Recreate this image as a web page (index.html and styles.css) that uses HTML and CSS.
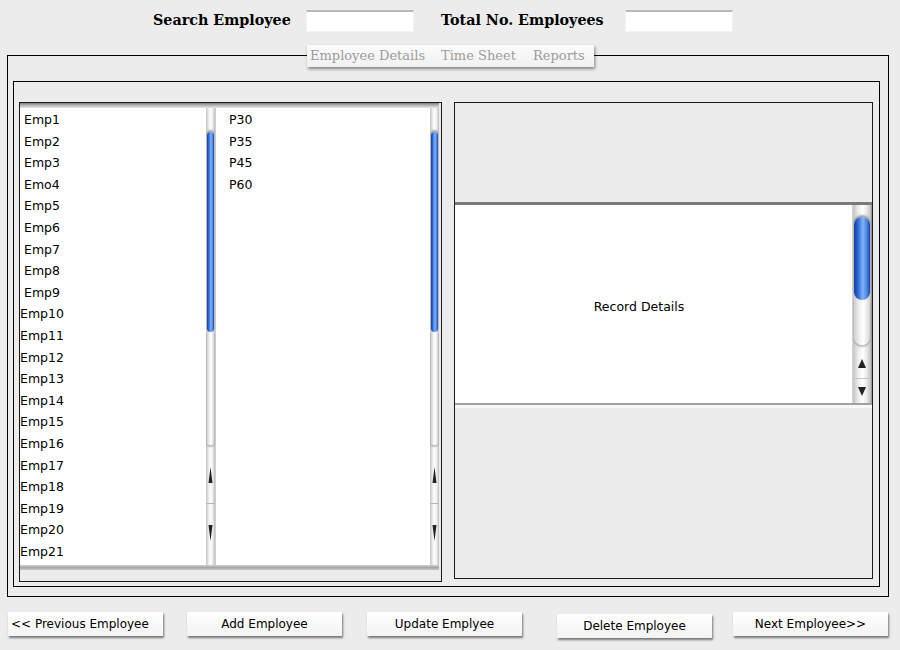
FILE: index.html
```html
<!DOCTYPE html>
<html>
<head>
<meta charset="utf-8">
<title>Employees</title>
<link rel="stylesheet" href="styles.css">
</head>
<body>
<header class="top">
  <label class="lbl lbl-search">Search Employee</label>
  <input class="field" type="text">
  <label class="lbl lbl-total">Total No. Employees</label>
  <input class="field" type="text">
</header>

<section class="frame">
  <nav class="tabs">
    <span class="tab t1">Employee Details</span>
    <span class="tab t2">Time Sheet</span>
    <span class="tab t3">Reports</span>
  </nav>
  <div class="inner">
    <div class="lists-panel">
      <div class="listbox">
        <div class="strip-top"></div>
        <div class="lists-row">
          <ul class="list list-emp">
            <li class="pad">Emp1</li>
            <li class="pad">Emp2</li>
            <li class="pad">Emp3</li>
            <li class="pad">Emo4</li>
            <li class="pad">Emp5</li>
            <li class="pad">Emp6</li>
            <li class="pad">Emp7</li>
            <li class="pad">Emp8</li>
            <li class="pad">Emp9</li>
            <li>Emp10</li>
            <li>Emp11</li>
            <li>Emp12</li>
            <li>Emp13</li>
            <li>Emp14</li>
            <li>Emp15</li>
            <li>Emp16</li>
            <li>Emp17</li>
            <li>Emp18</li>
            <li>Emp19</li>
            <li>Emp20</li>
            <li>Emp21</li>
          </ul>
          <div class="sb sb-small sb-first">
            <div class="sb-gap"></div>
            <div class="sb-thumb"></div>
            <div class="sb-tail"></div>
            <svg class="sb-arrows" width="9" height="120" viewBox="0 0 9 120">
              <polygon points="4.5,22 2.5,38 6.5,38" fill="#222"/>
              <line x1="0" y1="58.5" x2="9" y2="58.5" stroke="#b8b8b8" stroke-width="1"/>
              <polygon points="2.5,80 6.5,80 4.5,96" fill="#222"/>
            </svg>
          </div>
          <ul class="list list-p">
            <li>P30</li>
            <li>P35</li>
            <li>P45</li>
            <li>P60</li>
          </ul>
          <div class="sb sb-small">
            <div class="sb-gap"></div>
            <div class="sb-thumb"></div>
            <div class="sb-tail"></div>
            <svg class="sb-arrows" width="9" height="120" viewBox="0 0 9 120">
              <polygon points="4.5,22 2.5,38 6.5,38" fill="#222"/>
              <line x1="0" y1="58.5" x2="9" y2="58.5" stroke="#b8b8b8" stroke-width="1"/>
              <polygon points="2.5,80 6.5,80 4.5,96" fill="#222"/>
            </svg>
          </div>
        </div>
        <div class="strip-bottom"></div>
      </div>
    </div>

    <div class="detail-panel">
      <div class="detail-top"></div>
      <div class="record">
        <div class="record-text">Record Details</div>
        <div class="sb sb-big">
          <div class="sb-gap"></div>
          <div class="sb-thumb"></div>
          <div class="sb-tail"></div>
          <svg class="sb-arrows" width="18" height="58" viewBox="0 0 18 58">
            <polygon points="9,14 5,23 13,23" fill="#222"/>
            <line x1="0" y1="33.5" x2="18" y2="33.5" stroke="#c4c4c4" stroke-width="1"/>
            <polygon points="5,42 13,42 9,51" fill="#222"/>
          </svg>
        </div>
      </div>
    </div>
  </div>
</section>

<footer class="buttons">
  <button class="btn btn-prev">&lt;&lt; Previous Employee</button>
  <button class="btn btn-add">Add Employee</button>
  <button class="btn btn-update">Update Emplyee</button>
  <button class="btn btn-delete">Delete Employee</button>
  <button class="btn btn-next">Next Employee&gt;&gt;</button>
</footer>
</body>
</html>
```

FILE: styles.css
```css
* { box-sizing: border-box; }

html, body {
  margin: 0;
  padding: 0;
}

body {
  width: 900px;
  height: 650px;
  overflow: hidden;
  background: #ececec;
  font-family: "DejaVu Sans", "Noto Sans", sans-serif;
  color: #000;
}

/* ---------- header ---------- */
.top {
  display: flex;
  align-items: flex-start;
  height: 55px;
  padding-top: 10px;
}

.lbl {
  font-family: "DejaVu Serif", "Liberation Serif", serif;
  font-weight: bold;
  font-size: 14.3px;
  line-height: 20px;
  white-space: nowrap;
}

.lbl-search { margin-left: 153px; width: 153px; }
.lbl-total  { margin-left: 27px;  width: 184px; }

.field {
  width: 108px;
  height: 22px;
  margin: 0;
  padding: 0;
  background: #fff;
  border: 1px solid #f3f3f3;
  border-top: 2px solid #b9b9b9;
  outline: none;
}

/* ---------- frame & tabs ---------- */
.frame {
  margin-left: 7px;
  width: 882px;
  height: 542px;
  border: 1px solid #000;
  padding: 0 8px 0 5px;
}

.tabs {
  display: flex;
  align-items: center;
  margin-top: -11px;
  margin-left: 294px;
  width: 287px;
  height: 22px;
  padding: 0 0 2px 3px;
  background: linear-gradient(#fbfbfb, #f1f1f1);
  box-shadow: 1px 2px 3px rgba(0, 0, 0, 0.45);
  font-family: "DejaVu Serif", "Liberation Serif", serif;
  font-size: 13px;
  color: #9c9c9c;
}

.tab { white-space: nowrap; }
.t1 { width: 131px; }
.t2 { width: 92px; }

.inner {
  margin-top: 14px;
  height: 506px;
  border: 1px solid #000;
  display: flex;
  align-items: flex-start;
  gap: 12px;
  padding: 20px 6px 0 5px;
}

/* ---------- left lists panel ---------- */
.lists-panel {
  width: 423px;
  height: 480px;
  border: 1px solid #1a1a1a;
  padding: 0 2px 11px 0;
}

.listbox {
  display: flex;
  flex-direction: column;
  height: 467px;
}

.strip-top {
  height: 5px;
  background: linear-gradient(#808080, #b4b4b4 45%, #e6e6e6);
}

.strip-bottom {
  height: 5px;
  background: linear-gradient(#d2d2d2, #a6a6a6 50%, #c6c6c6);
}

.lists-row {
  display: flex;
  height: 457px;
}

.list {
  list-style: none;
  margin: 0;
  padding: 1px 0 0;
  background: #fff;
  font-size: 12.5px;
  line-height: 21.6px;
  overflow: hidden;
}

.list-emp { width: 186px; }
.list-emp li.pad { padding-left: 4px; }
.list-p { width: 214px; padding-left: 13px; }

/* ---------- scrollbars ---------- */
.sb {
  display: flex;
  flex-direction: column;
  background: linear-gradient(to right, #c4c4c4, #eeeeee 30%, #ffffff 55%, #e4e4e4 80%, #bcbcbc);
}

.sb-small { width: 9px; height: 457px; }
.sb-first { width: 10px; border-right: 1px solid #cfcfcf; }

.sb-small .sb-gap { height: 24px; }
.sb-small .sb-thumb { height: 200px; margin: 0 1px; border-radius: 4px; }
.sb-small .sb-tail { height: 113px; margin: 0 1px; }

.sb-thumb {
  background: linear-gradient(to right, #1b3d9e, #2e67d6 25%, #7fb4f7 55%, #4a86e4 80%, #1d44a8);
  box-shadow: 0 -2px 2px rgba(0, 0, 0, 0.35);
}

.sb-tail {
  border-radius: 0 0 5px 5px;
  background: linear-gradient(to right, #cfcfcf, #f6f6f6 40%, #ffffff 60%, #d6d6d6);
  box-shadow: 0 2px 2px rgba(0, 0, 0, 0.25);
}

.sb-arrows { display: block; flex: none; }

/* ---------- right detail panel ---------- */
.detail-panel {
  width: 419px;
  height: 477px;
  border: 1px solid #1a1a1a;
}

.detail-top { height: 99px; }

.record {
  display: flex;
  height: 203px;
  border-top: 3px solid #7a7a7a;
  border-bottom: 2px solid #a2a2a2;
  box-shadow: 0 3px 0 #f8f8f8;
  background: #fff;
}

.record-text {
  flex: 1;
  display: flex;
  align-items: center;
  justify-content: center;
  padding: 5px 29px 0 0;
  font-size: 12.5px;
}

.sb-big {
  width: 20px;
  height: 198px;
  border-left: 1px solid #d4d4d4;
  border-right: 1px solid #9c9c9c;
}

.sb-big .sb-gap { height: 12px; }
.sb-big .sb-thumb { height: 83px; margin: 0 1px; border-radius: 8px; }
.sb-big .sb-tail { height: 45px; margin: 0 1px; border-radius: 0 0 9px 9px; }

/* ---------- buttons ---------- */
.buttons {
  display: flex;
  align-items: flex-start;
  margin-top: 15px;
  padding-left: 8px;
}

.btn {
  width: 155px;
  height: 24px;
  margin: 0;
  padding: 0 0 1px;
  border: none;
  background: linear-gradient(#ffffff, #f3f3f3);
  box-shadow: 1px 2px 2px rgba(0, 0, 0, 0.5);
  font-family: "DejaVu Sans", "Noto Sans", sans-serif;
  font-size: 12px;
  color: #000;
  text-align: center;
}

.btn-prev { text-align: left; padding-left: 3px; }
.btn-add { margin-left: 24px; }
.btn-update { margin-left: 25px; }
.btn-delete { margin-left: 35px; margin-top: 2px; }
.btn-next { margin-left: 21px; }
```
